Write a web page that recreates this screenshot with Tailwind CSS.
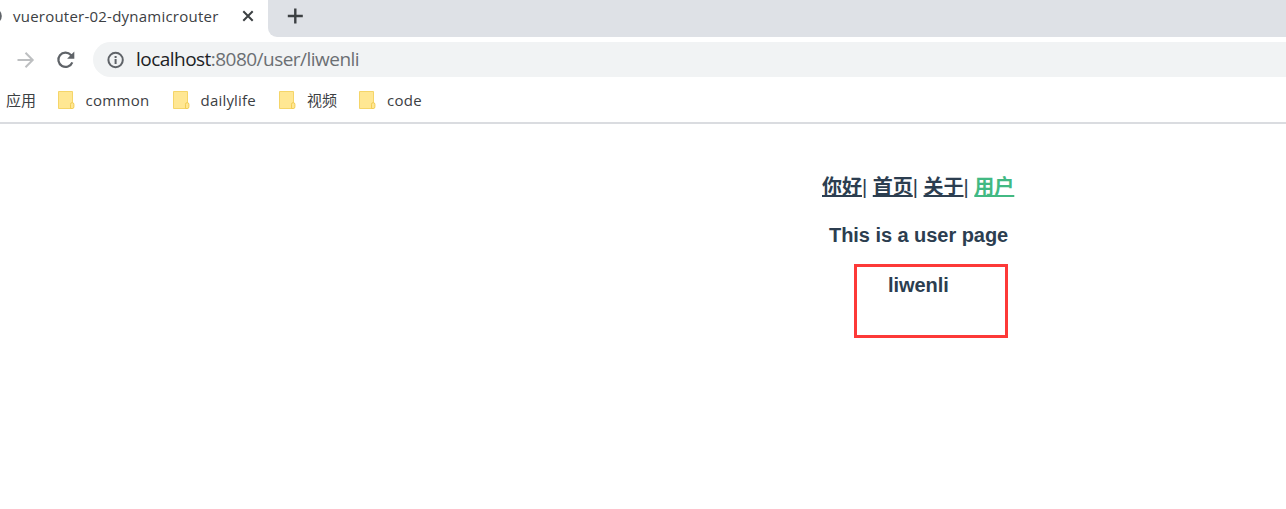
<!DOCTYPE html>
<html lang="zh">
<head>
<meta charset="utf-8">
<title>vuerouter-02-dynamicrouter</title>
<script src="https://cdn.jsdelivr.net/npm/@tailwindcss/browser@4"></script>
</head>
<body class="h-[509px] overflow-hidden bg-white font-['Open_Sans','Noto_Sans_CJK_SC',sans-serif] whitespace-nowrap">
<header class="h-[124px] border-b-2 border-[#dadce0]">
  <div class="flex h-[37px] bg-white">
    <div class="flex w-[268px] shrink-0 items-center bg-white pb-[5px]">
      <svg class="h-4 w-[13px] shrink-0" viewBox="0 0 13 16"><circle cx="-6" cy="8" r="7.8" fill="#5f6368"/></svg>
      <div class="w-[229px] pb-px text-[15px] leading-5 tracking-[0.23px] text-[#3c4043]">vuerouter-02-dynamicrouter</div>
      <svg class="h-3 w-3 shrink-0" viewBox="0 0 12 12" fill="none" stroke="#3c4043" stroke-width="2"><path d="M1.3 1.3l9.4 9.4M10.7 1.3l-9.4 9.4"/></svg>
    </div>
    <div class="flex grow rounded-bl-[9px] bg-[#dee1e6] pt-2 pl-[19px]">
      <svg class="h-4 w-4" viewBox="0 0 16 16" fill="none" stroke="#3c4043" stroke-width="2.4"><path d="M8.3 .5v15M.8 8h15"/></svg>
    </div>
  </div>
  <div class="mt-[5px] flex h-[35px] items-center">
    <svg class="ml-4 h-5 w-5 shrink-0" viewBox="0 0 20 20" fill="none" stroke="#bdbfc1" stroke-width="2"><path d="M1.5 10h15M9.5 2.8l7.2 7.2-7.2 7.2"/></svg>
    <svg class="ml-5 h-5 w-5 shrink-0" viewBox="0 0 20 20" fill="none" stroke="#5f6368" stroke-width="2.2"><path d="M16.3 12.3a7.2 7.2 0 1 1-1.4-7.4L16 6"/><path d="M18.3 1.5v7.2h-7.2z" fill="#5f6368" stroke="none"/></svg>
    <div class="ml-[17px] flex h-[35px] grow items-center rounded-l-full bg-[#f1f3f4] pl-[14px]">
      <svg class="h-[18px] w-[18px] shrink-0" viewBox="0 0 18 18" fill="none" stroke="#5f6368" stroke-width="2"><circle cx="8.6" cy="9" r="7.2"/><path d="M8.6 8v5M8.6 5v2"/></svg>
      <div class="ml-[11px] pb-[2px] text-[19px] leading-6 tracking-[-0.53px] text-[#6b6f73]"><span class="text-[#202124]">localhost</span>:8080/user/liwenli</div>
    </div>
  </div>
  <nav class="flex h-[45px] items-center pl-[6px] text-[15px] leading-5 text-[#3c4043]">
    <div class="w-[52px]">应用</div>
    <div class="flex w-[115px] items-center tracking-[0.3px]"><svg class="mr-[10.5px] h-[18px] w-[17px]" viewBox="0 0 17 18"><path d="M.5.5h14v17H.5z" fill="#ffe793" stroke="#f5d569"/><path d="M12.5 17.5v-4.2a1.7 1.7 0 0 1 3.4 0v2.6q0 1.6-1.6 1.6z" fill="#ffe793" stroke="#f2cd55"/></svg>common</div>
    <div class="flex w-[106px] items-center tracking-[0.2px]"><svg class="mr-[10.5px] h-[18px] w-[17px]" viewBox="0 0 17 18"><path d="M.5.5h14v17H.5z" fill="#ffe793" stroke="#f5d569"/><path d="M12.5 17.5v-4.2a1.7 1.7 0 0 1 3.4 0v2.6q0 1.6-1.6 1.6z" fill="#ffe793" stroke="#f2cd55"/></svg>dailylife</div>
    <div class="flex w-[80px] items-center"><svg class="mr-[11px] h-[18px] w-[17px]" viewBox="0 0 17 18"><path d="M.5.5h14v17H.5z" fill="#ffe793" stroke="#f5d569"/><path d="M12.5 17.5v-4.2a1.7 1.7 0 0 1 3.4 0v2.6q0 1.6-1.6 1.6z" fill="#ffe793" stroke="#f2cd55"/></svg>视频</div>
    <div class="flex items-center tracking-[0.3px]"><svg class="mr-[11px] h-[18px] w-[17px]" viewBox="0 0 17 18"><path d="M.5.5h14v17H.5z" fill="#ffe793" stroke="#f5d569"/><path d="M12.5 17.5v-4.2a1.7 1.7 0 0 1 3.4 0v2.6q0 1.6-1.6 1.6z" fill="#ffe793" stroke="#f2cd55"/></svg>code</div>
  </nav>
</header>
<main class="pl-[822px] pt-[51px] font-['Liberation_Sans','Noto_Sans_CJK_SC',sans-serif] text-[20px] leading-6 text-[#2c3e50]">
  <div class="h-6 decoration-2"><a class="font-bold underline decoration-2 underline-offset-1">你好</a>| <a class="font-bold underline decoration-2 underline-offset-1">首页</a>| <a class="font-bold underline decoration-2 underline-offset-1">关于</a>| <a class="font-bold text-[#42b983] underline decoration-2 underline-offset-1">用户</a></div>
  <div class="mt-6 ml-[7px] h-6 font-bold tracking-[-0.05px]">This is a user page</div>
  <div class="mt-[17px] ml-8 h-[74px] w-[154px] border-3 border-[#fd3938] pt-[6px] pl-[31px] font-bold tracking-[-0.05px]">liwenli</div>
</main>
</body>
</html>
